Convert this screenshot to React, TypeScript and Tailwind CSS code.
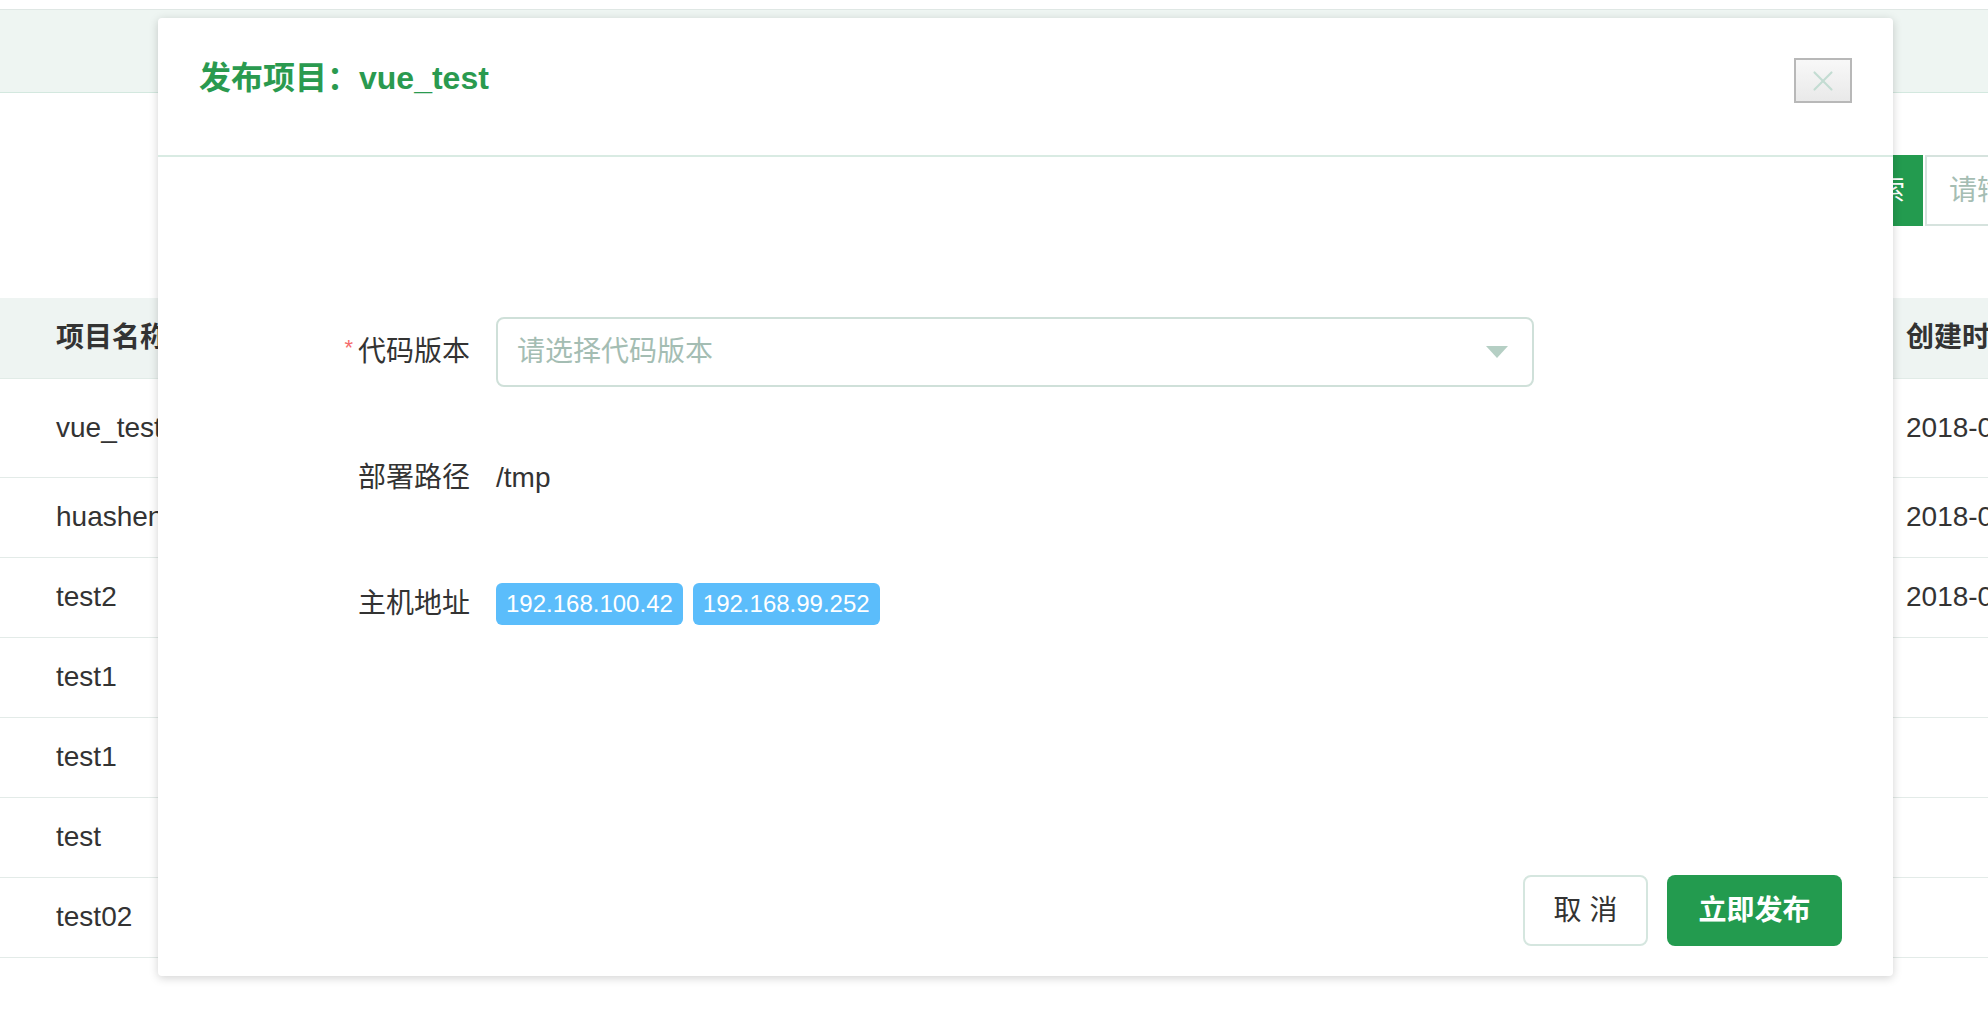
import { X } from 'lucide-react'

const rows = [
  { name: 'vue_test', created: '2018-06-12 14:32:10', tall: true },
  { name: 'huasheng_web', created: '2018-06-08 10:21:45' },
  { name: 'test2', created: '2018-06-05 09:12:33' },
  { name: 'test1', created: '' },
  { name: 'test1', created: '' },
  { name: 'test', created: '' },
  { name: 'test02', created: '' },
]

const hosts = ['192.168.100.42', '192.168.99.252']

function Background() {
  return (
    <div className="w-[2240px]">
      <div className="h-[9px]" />
      <div className="h-[84px] border-y border-t-[#dfe7e4] border-b-[#d3e8df] bg-[#eef5f2]" />
      <div className="h-[205px] flex items-start justify-end pt-[62px]">
        <button className="h-[71px] px-[18px] bg-[#239b4f] text-white text-[28px]">搜索</button>
        <div className="ml-[2px] h-[71px] w-[315px] border-2 border-[#d6e3de] pl-[22px] flex items-center text-[28px] text-[#a5bdb3]">
          请输入项目名称
        </div>
      </div>
      <table className="w-full border-collapse text-[28px] text-[#333]">
        <thead>
          <tr className="h-[80px] bg-[#eef4f2] border-b border-[#e1ebe7]">
            <th className="w-[1850px] pl-[56px] text-left font-semibold">项目名称</th>
            <th className="pl-[56px] text-left font-semibold">创建时间</th>
          </tr>
        </thead>
        <tbody>
          {rows.map((row, i) => (
            <tr key={i} className={`${row.tall ? 'h-[99px]' : 'h-[80px]'} border-b border-[#e3ebe8]`}>
              <td className="pl-[56px]">{row.name}</td>
              <td className="pl-[56px] whitespace-nowrap">{row.created}</td>
            </tr>
          ))}
        </tbody>
      </table>
    </div>
  )
}

function PublishModal() {
  return (
    <div className="absolute left-[158px] top-[18px] w-[1735px] h-[958px] bg-white rounded-[4px] shadow-[0_2px_10px_rgba(0,0,0,0.18)] flex flex-col">
      <div className="pt-[40px] pb-[52px] pl-[41px] pr-[41px] border-b-2 border-[#d9ebe3] flex items-center justify-between">
        <h2 className="mb-[5px] text-[32px] font-bold text-[#2a9a4f] leading-none">发布项目：vue_test</h2>
        <button className="w-[58px] h-[45px] border-2 border-[#b8b8b8] bg-gradient-to-b from-[#f8f8f8] to-[#e9e9e9] flex items-center justify-center">
          <X size={34} strokeWidth={1.5} className="text-[#c3dcd2]" />
        </button>
      </div>

      <div className="mt-[160px] flex flex-col gap-[56px] text-[28px] text-[#333]">
        <div className="h-[70px] flex items-center">
          <label className="w-[312px] text-right">
            <span className="text-[#f56c6c] text-[22px] align-top mr-[5px]">*</span>代码版本
          </label>
          <div className="ml-[26px] w-[1038px] h-[70px] border-2 border-[#cfe0d9] rounded-[8px] pl-[19px] pr-[24px] flex items-center justify-between">
            <span className="text-[#a4bdb3]">请选择代码版本</span>
            <svg width="22" height="12" viewBox="0 0 22 12">
              <path d="M0 0 L22 0 L11 12 Z" fill="#b5cfc4" />
            </svg>
          </div>
        </div>
        <div className="h-[70px] flex items-center">
          <label className="w-[312px] text-right">部署路径</label>
          <span className="ml-[26px]">/tmp</span>
        </div>
        <div className="h-[70px] flex items-center">
          <label className="w-[312px] text-right">主机地址</label>
          <div className="ml-[26px] flex gap-[10px]">
            {hosts.map((h) => (
              <span key={h} className="h-[42px] px-[10px] rounded-[6px] bg-[#5bbdfb] text-white text-[24px] font-medium flex items-center">
                {h}
              </span>
            ))}
          </div>
        </div>
      </div>

      <div className="mt-auto pb-[30px] pr-[51px] flex justify-end gap-[19px]">
        <button className="w-[125px] h-[71px] border-2 border-[#d5e6df] rounded-[8px] text-[28px] text-[#333]">取 消</button>
        <button className="w-[175px] h-[71px] rounded-[8px] bg-[#239b4f] text-white text-[28px] font-bold">立即发布</button>
      </div>
    </div>
  )
}

export default function App() {
  return (
    <div
      className="relative w-[1988px] h-[1014px] overflow-hidden bg-white"
      style={{ fontFamily: '"Liberation Sans", "Noto Sans CJK SC", sans-serif' }}
    >
      <Background />
      <PublishModal />
    </div>
  )
}
